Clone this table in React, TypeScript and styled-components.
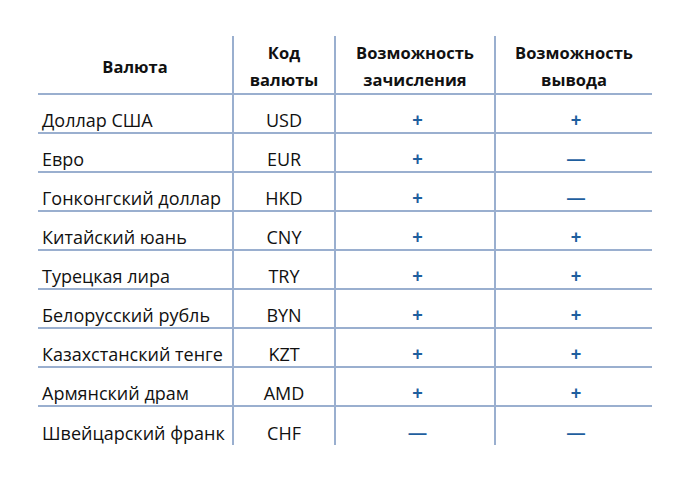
import React from 'react';
import styled, { createGlobalStyle } from 'styled-components';

const GlobalStyle = createGlobalStyle`
  body {
    margin: 0;
    background: #fff;
    font-family: 'Open Sans', 'Liberation Sans', sans-serif;
    color: #111;
  }
  * {
    box-sizing: border-box;
  }
`;

const LINE = '#9aafcf';

const Page = styled.div`
  width: 695px;
  height: 481px;
  padding: 36px 0 0 38px;
`;

const Table = styled.table`
  border-collapse: collapse;
  table-layout: fixed;
  width: 614px;
`;

const HeadCell = styled.th<{ $w: number }>`
  width: ${p => p.$w}px;
  height: 58px;
  padding: 3px 2px 0;
  font-size: 16.5px;
  font-weight: 700;
  line-height: 27px;
  text-align: center;
  vertical-align: middle;
  white-space: nowrap;
  border-bottom: 2px solid ${LINE};
  & + & {
    border-left: 2px solid ${LINE};
  }
`;

const Row = styled.tr`
  &:last-child td {
    border-bottom: none;
  }
`;

const Cell = styled.td<{ $align?: 'left' | 'center'; $shift?: number }>`
  height: 39px;
  padding: 0 4px 1px ${p => 4 + (p.$shift || 0)}px;
  font-size: 18px;
  line-height: 22px;
  text-align: ${p => p.$align || 'center'};
  vertical-align: bottom;
  white-space: nowrap;
  border-bottom: 2px solid ${LINE};
  & + & {
    border-left: 2px solid ${LINE};
  }
`;

const Mark = styled.span`
  color: #1f5f9e;
  font-weight: 700;
  font-size: 18px;
  font-family: 'Liberation Sans', sans-serif;
`;

type Currency = { name: string; code: string; inc: boolean; out: boolean };

const currencies: Currency[] = [
  { name: 'Доллар США', code: 'USD', inc: true, out: true },
  { name: 'Евро', code: 'EUR', inc: true, out: false },
  { name: 'Гонконгский доллар', code: 'HKD', inc: true, out: false },
  { name: 'Китайский юань', code: 'CNY', inc: true, out: true },
  { name: 'Турецкая лира', code: 'TRY', inc: true, out: true },
  { name: 'Белорусский рубль', code: 'BYN', inc: true, out: true },
  { name: 'Казахстанский тенге', code: 'KZT', inc: true, out: true },
  { name: 'Армянский драм', code: 'AMD', inc: true, out: true },
  { name: 'Швейцарский франк', code: 'CHF', inc: false, out: false }
];

const Sign = ({ on }: { on: boolean }) => <Mark>{on ? '+' : '—'}</Mark>;

export default function App() {
  return (
    <Page>
      <GlobalStyle />
      <Table>
        <thead>
          <tr>
            <HeadCell $w={195}>Валюта</HeadCell>
            <HeadCell $w={102}>
              Код
              <br />
              валюты
            </HeadCell>
            <HeadCell $w={160}>
              Возможность
              <br />
              зачисления
            </HeadCell>
            <HeadCell $w={157}>
              Возможность
              <br />
              вывода
            </HeadCell>
          </tr>
        </thead>
        <tbody>
          {currencies.map(c => (
            <Row key={c.code}>
              <Cell $align="left">{c.name}</Cell>
              <Cell>{c.code}</Cell>
              <Cell $shift={5}>
                <Sign on={c.inc} />
              </Cell>
              <Cell $shift={4}>
                <Sign on={c.out} />
              </Cell>
            </Row>
          ))}
        </tbody>
      </Table>
    </Page>
  );
}
